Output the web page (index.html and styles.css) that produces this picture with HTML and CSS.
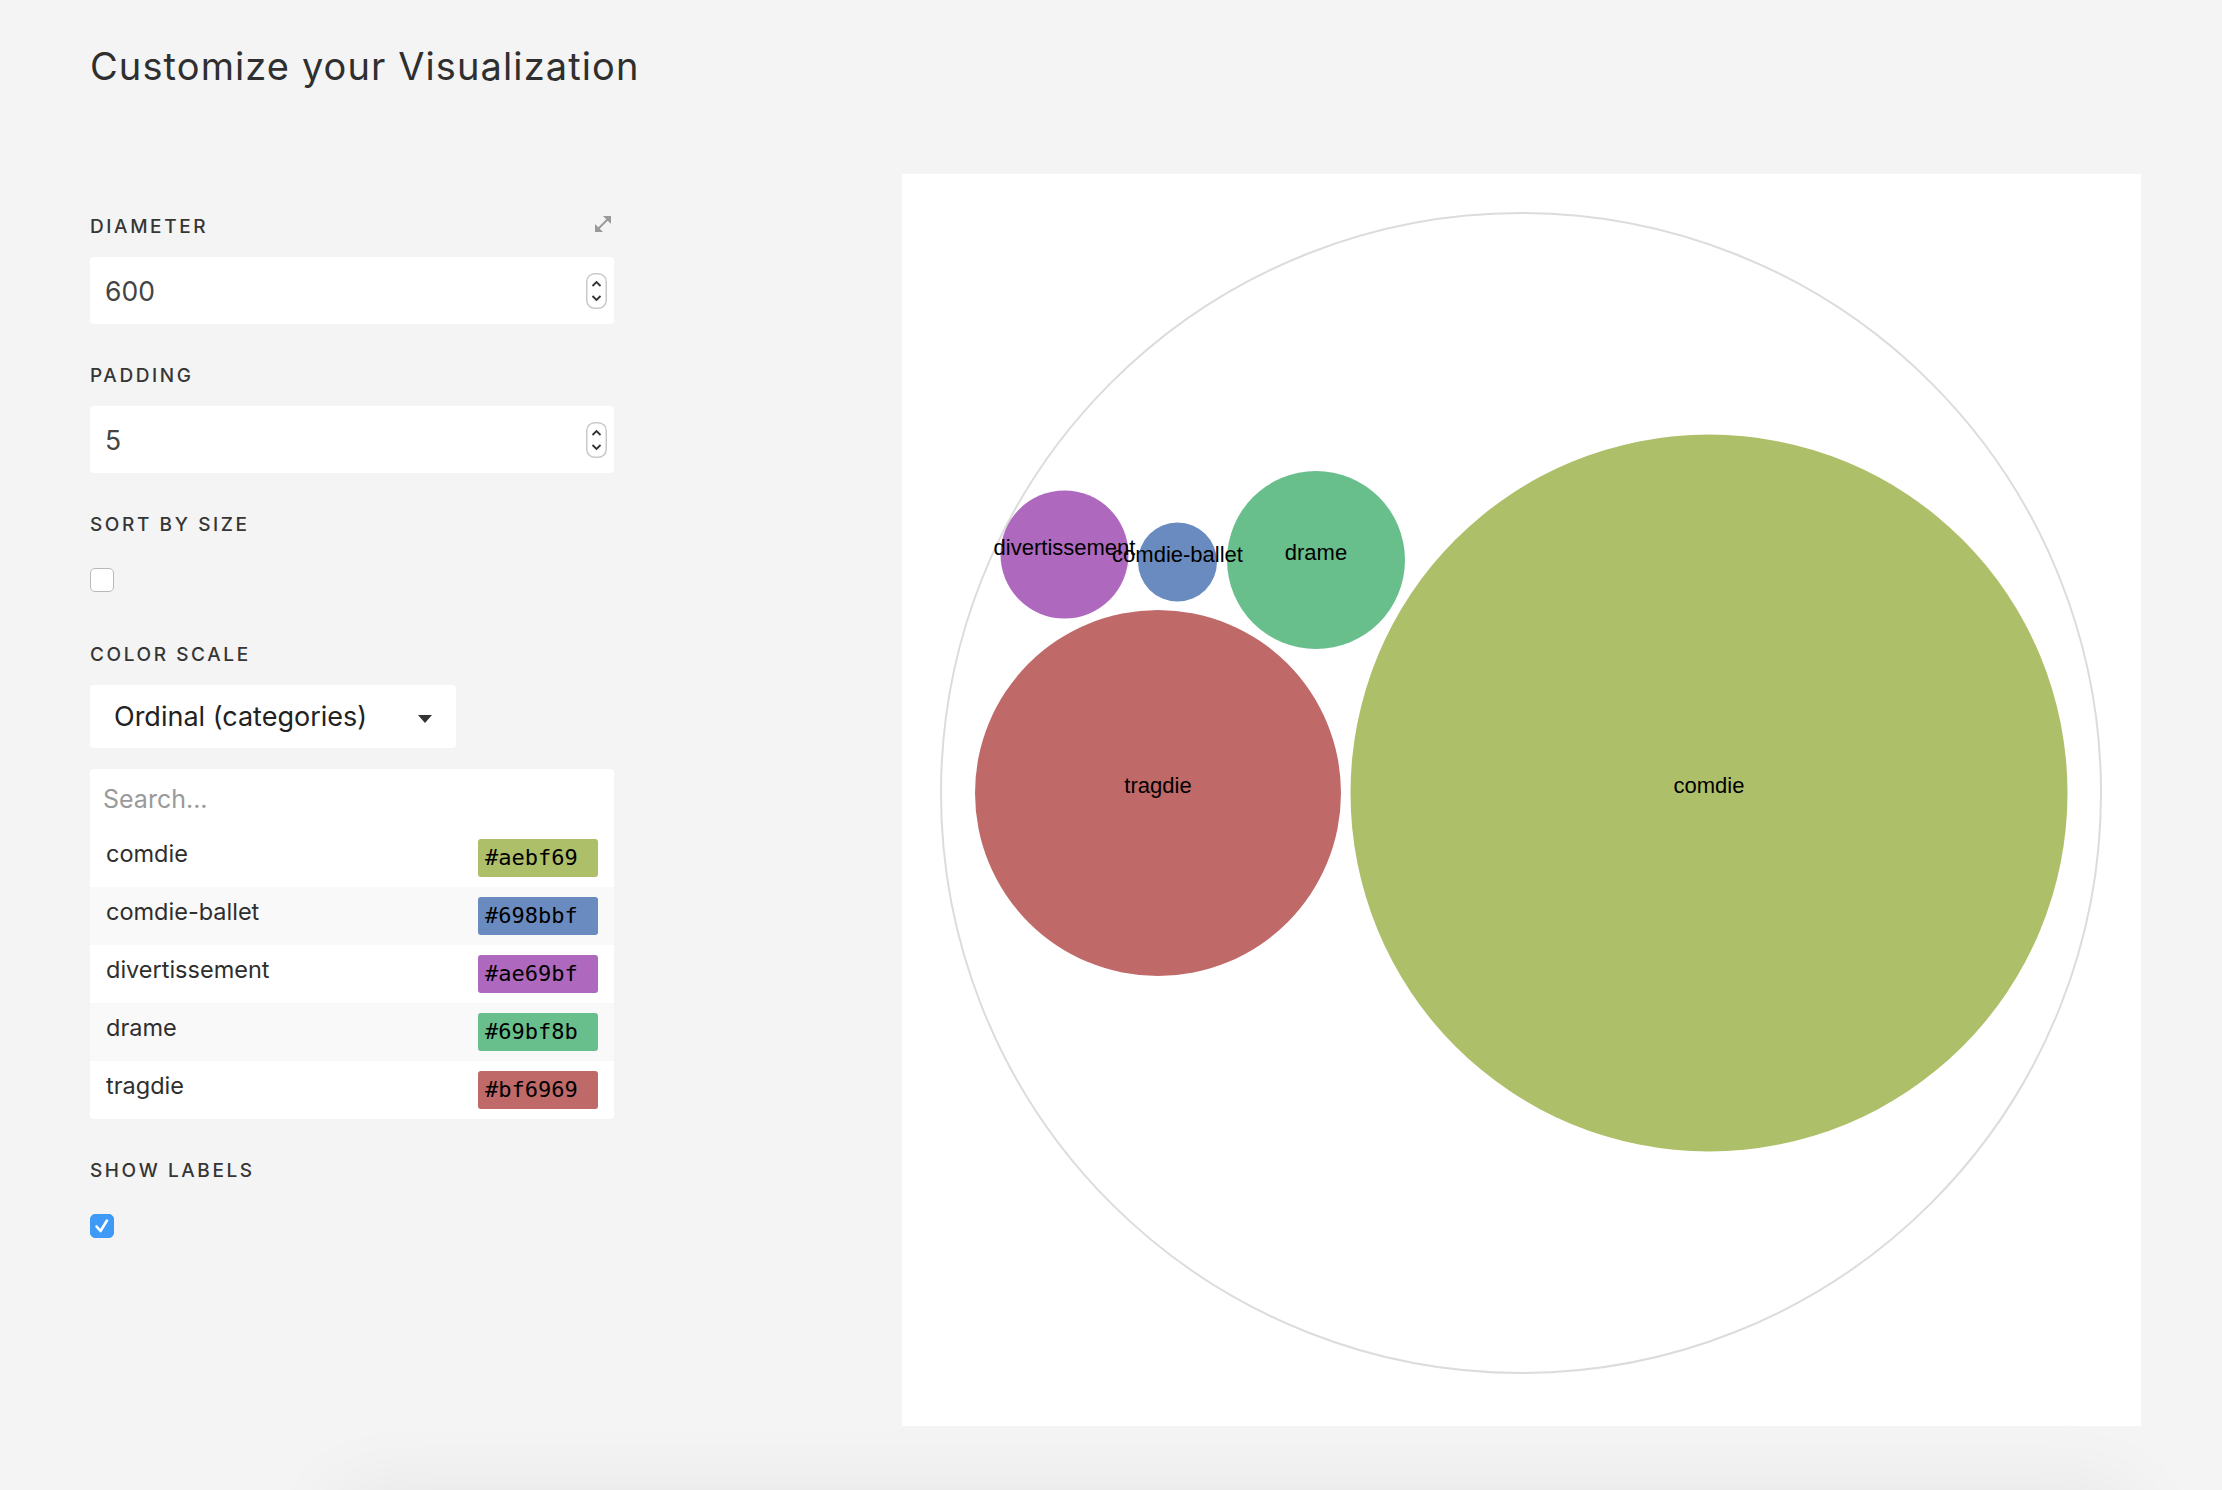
FILE: index.html
```html
<!DOCTYPE html>
<html lang="en">
<head>
<meta charset="utf-8">
<title>Customize your Visualization</title>
<link rel="stylesheet" href="styles.css">
</head>
<body>
<div class="page">
  <h1 class="title">Customize your Visualization</h1>
  <div class="layout">
    <div class="controls">
      <div class="field">
        <div class="label-row">
          <span class="label">Diameter</span>
          <svg class="expand" width="20" height="20" viewBox="0 0 20 20">
            <line x1="4.5" y1="15.5" x2="15.5" y2="4.5" stroke="#9a9a9a" stroke-width="2"/>
            <polygon points="10,2 18,2 18,10" fill="#9a9a9a"/>
            <polygon points="2,10 2,18 10,18" fill="#9a9a9a"/>
          </svg>
        </div>
        <div class="input">
          <span class="input-value">600</span>
          <svg class="spinner" width="21" height="36" viewBox="0 0 21 36">
            <rect x="0.75" y="0.75" width="19.5" height="34.5" rx="8" fill="#fff" stroke="#c9c9c9" stroke-width="1.5"/>
            <polyline points="6.5,13 10.5,9 14.5,13" fill="none" stroke="#333" stroke-width="1.8"/>
            <polyline points="6.5,23 10.5,27 14.5,23" fill="none" stroke="#333" stroke-width="1.8"/>
          </svg>
        </div>
      </div>
      <div class="field">
        <div class="label-row"><span class="label">Padding</span></div>
        <div class="input">
          <span class="input-value">5</span>
          <svg class="spinner" width="21" height="36" viewBox="0 0 21 36">
            <rect x="0.75" y="0.75" width="19.5" height="34.5" rx="8" fill="#fff" stroke="#c9c9c9" stroke-width="1.5"/>
            <polyline points="6.5,13 10.5,9 14.5,13" fill="none" stroke="#333" stroke-width="1.8"/>
            <polyline points="6.5,23 10.5,27 14.5,23" fill="none" stroke="#333" stroke-width="1.8"/>
          </svg>
        </div>
      </div>
      <div class="field field-check">
        <div class="label-row"><span class="label">Sort by size</span></div>
        <div class="check-wrap"><div class="checkbox"></div></div>
      </div>
      <div class="field">
        <div class="label-row"><span class="label">Color scale</span></div>
        <div class="select">
          <span class="select-value">Ordinal (categories)</span>
          <span class="caret"></span>
        </div>
        <div class="color-list">
          <div class="search">Search...</div>
          <div class="color-row">
            <span class="row-name">comdie</span>
            <span class="swatch swatch-comdie">#aebf69</span>
          </div>
          <div class="color-row alt">
            <span class="row-name">comdie-ballet</span>
            <span class="swatch swatch-ballet">#698bbf</span>
          </div>
          <div class="color-row">
            <span class="row-name">divertissement</span>
            <span class="swatch swatch-divert">#ae69bf</span>
          </div>
          <div class="color-row alt">
            <span class="row-name">drame</span>
            <span class="swatch swatch-drame">#69bf8b</span>
          </div>
          <div class="color-row">
            <span class="row-name">tragdie</span>
            <span class="swatch swatch-tragedie">#bf6969</span>
          </div>
        </div>
      </div>
      <div class="field">
        <div class="label-row"><span class="label">Show labels</span></div>
        <div class="check-wrap">
          <div class="checkbox checked">
            <svg width="24" height="24" viewBox="0 0 24 24">
              <polyline points="6.5,12.5 10.5,17 17,6.5" fill="none" stroke="#fff" stroke-width="2.6" stroke-linecap="round" stroke-linejoin="round"/>
            </svg>
          </div>
        </div>
      </div>
    </div>
    <div class="chart-card">
      <svg class="chart" width="1239" height="1252" viewBox="0 0 1239 1252">
        <circle cx="619" cy="619" r="580" fill="none" stroke="#dcdcdc" stroke-width="2"/>
        <circle cx="807" cy="619" r="358.5" fill="#aebf69"/>
        <circle cx="256" cy="619" r="183" fill="#bf6969"/>
        <circle cx="414" cy="386" r="89" fill="#69bf8b"/>
        <circle cx="162.5" cy="380.5" r="64" fill="#ae69bf"/>
        <circle cx="275.5" cy="388" r="39.5" fill="#698bbf"/>
        <g class="labels">
          <text x="807" y="619">comdie</text>
          <text x="256" y="619">tragdie</text>
          <text x="414" y="386">drame</text>
          <text x="162.5" y="380.5">divertissement</text>
          <text x="275.5" y="388">comdie-ballet</text>
        </g>
      </svg>
    </div>
  </div>
  <div class="next-card"></div>
</div>
</body>
</html>
```
FILE: styles.css
```css
html, body {
  margin: 0;
  padding: 0;
  background: #f4f4f4;
  overflow: hidden;
}

body {
  font-family: "Inter", "Roboto", sans-serif;
  color: #333;
}

.page {
  padding: 44px 0 0 90px;
}

.title {
  margin: 0;
  font-size: 38px;
  line-height: 44px;
  font-weight: 400;
  color: #2f2f2f;
  letter-spacing: 1.1px;
}

.layout {
  display: flex;
  align-items: flex-start;
  margin-top: 86px;
}

.controls {
  width: 524px;
  padding-top: 41px;
  flex: none;
}

.field {
  margin-bottom: 40px;
}

.label-row {
  display: flex;
  justify-content: space-between;
  align-items: center;
  height: 24px;
  margin-bottom: 18px;
}

.label {
  font-size: 19px;
  line-height: 24px;
  font-weight: 500;
  letter-spacing: 2.6px;
  text-transform: uppercase;
  color: #363636;
}

.expand {
  margin-right: 1px;
  margin-top: -6px;
}

.input {
  height: 67px;
  background: #fff;
  border-radius: 4px;
  display: flex;
  align-items: center;
  justify-content: space-between;
  padding: 0 7px 0 15px;
  box-sizing: border-box;
}

.input-value {
  font-size: 26.5px;
  color: #444;
}

.spinner {
  display: block;
  margin-top: 1px;
}

.field-check {
  margin-bottom: 51px;
}

.check-wrap {
  padding-top: 13px;
}

.checkbox {
  width: 24px;
  height: 24px;
  box-sizing: border-box;
  border: 1px solid #b9b9b9;
  border-radius: 5px;
  background: #fff;
}

.checkbox.checked {
  background: #3e9af6;
  border-color: #3e9af6;
}

.checkbox.checked svg {
  display: block;
  margin: -1px;
}

.select {
  width: 366px;
  height: 63px;
  background: #fff;
  border-radius: 4px;
  display: flex;
  align-items: center;
  justify-content: space-between;
  padding: 0 24px;
  box-sizing: border-box;
}

.select-value {
  font-size: 27px;
  color: #222;
}

.caret {
  width: 0;
  height: 0;
  border-left: 7.5px solid transparent;
  border-right: 7.5px solid transparent;
  border-top: 8px solid #333;
  margin-top: 4px;
}

.color-list {
  margin-top: 21px;
  background: #fff;
  border-radius: 4px;
  overflow: hidden;
}

.search {
  height: 60px;
  line-height: 60px;
  padding-left: 13px;
  font-size: 25px;
  color: #9a9a9a;
}

.color-row {
  height: 58px;
  display: flex;
  justify-content: space-between;
  align-items: center;
  padding: 0 16px;
}

.color-row.alt {
  background: #f9f9f9;
}

.row-name {
  align-self: flex-start;
  padding-top: 12px;
  font-size: 23.5px;
  line-height: 26px;
  color: #2e2e2e;
}

.swatch {
  width: 120px;
  height: 38px;
  line-height: 38px;
  box-sizing: border-box;
  padding-left: 7px;
  border-radius: 3px;
  font-family: "DejaVu Sans Mono", "Liberation Mono", monospace;
  font-size: 22px;
  color: #000;
}

.swatch-comdie { background: #aebf69; }
.swatch-ballet { background: #698bbf; }
.swatch-divert { background: #ae69bf; }
.swatch-drame { background: #69bf8b; }
.swatch-tragedie { background: #bf6969; }

.chart-card {
  width: 1239px;
  height: 1252px;
  margin-left: 288px;
  background: #fff;
  flex: none;
}

.chart {
  display: block;
}

.labels text {
  font-family: "Liberation Sans", Arial, sans-serif;
  font-size: 22px;
  fill: #000;
  text-anchor: middle;
}

.next-card {
  width: 1790px;
  height: 300px;
  margin: 70px 0 0 250px;
  background: #f4f4f4;
  box-shadow: 0 0 80px rgba(0, 0, 0, 0.07);
}
```
